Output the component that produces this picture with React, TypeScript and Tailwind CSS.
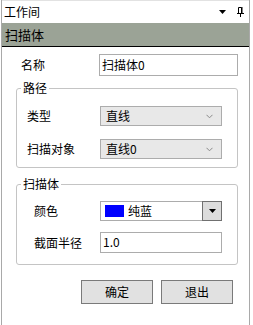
const FONT = { fontFamily: '"Microsoft YaHei", "Noto Sans CJK SC", sans-serif' };

function Chevron() {
  return (
    <svg width="7" height="5" viewBox="0 0 7 5" className="shrink-0">
      <path d="M0.5 0.8 L3.5 3.8 L6.5 0.8" fill="none" stroke="#8a8a8a" strokeWidth="1" />
    </svg>
  );
}

function Select({ value }: { value: string }) {
  return (
    <div className="flex h-[20px] w-[122px] items-center justify-between border border-[#acacac] bg-[#e8e8e8] pl-[5px] pr-[8px] text-[12px] leading-[16px] text-black">
      <span>{value}</span>
      <Chevron />
    </div>
  );
}

function Group({ title, children }: { title: string; children: React.ReactNode }) {
  return (
    <fieldset className="ml-[14px] w-[222px] rounded-[3px] border border-[#c4c4c4] p-0">
      <legend className="ml-[4px] px-[2px] text-[12px] leading-[16px] text-black">{title}</legend>
      {children}
    </fieldset>
  );
}

export default function App() {
  return (
    <div className="h-[325px] w-[253px] bg-white" style={FONT}>
      <div className="ml-[1px] flex h-full w-[249px] flex-col border-x border-[#a9a9a9]">
        {/* header */}
        <div className="flex h-[23px] shrink-0 items-center justify-between border-t border-[#e2e2e2] pl-[2px] pr-[5px]">
          <span className="text-[12px] leading-[16px] text-black">工作间</span>
          <div className="flex items-center gap-[11px]">
            <svg width="7" height="4" viewBox="0 0 7 4">
              <path d="M0 0 H7 L3.5 4 Z" fill="#000" />
            </svg>
            <svg width="7" height="10" viewBox="0 0 7 10">
              <path d="M1.5 0.5 H4.5 V6.5 M1.5 0.5 V6.5" fill="none" stroke="#000" strokeWidth="1" />
              <path d="M4.5 0 H5.5 V6.5 H4.5 Z" fill="#000" />
              <path d="M0 6.5 H7" stroke="#000" strokeWidth="1" />
              <path d="M3.5 6.5 V10" stroke="#000" strokeWidth="1" />
            </svg>
          </div>
        </div>
        <div className="flex h-[24px] shrink-0 items-center border-b border-black bg-[#9ba396] pl-[3px] text-[13px] leading-[16px] text-black">
          扫描体
        </div>

        {/* name */}
        <div className="mt-[7px] flex items-center">
          <span className="ml-[19px] w-[78px] text-[12px] leading-[16px] text-black">名称</span>
          <div className="flex h-[22px] w-[139px] items-center border border-[#acacac] pl-[2px] text-[12px] leading-[16px] text-black">
            扫描体0
          </div>
        </div>

        <div className="mt-[4px]">
          <Group title="路径">
            <div className="flex flex-col gap-[13px] pb-[8px] pl-[10px] pt-[10px]">
              <div className="flex items-center">
                <span className="w-[73px] text-[12px] leading-[16px] text-black">类型</span>
                <Select value="直线" />
              </div>
              <div className="flex items-center">
                <span className="w-[73px] text-[12px] leading-[16px] text-black">扫描对象</span>
                <Select value="直线0" />
              </div>
            </div>
          </Group>
        </div>

        <div className="mt-[8px]">
          <Group title="扫描体">
            <div className="flex flex-col gap-[11px] pb-[11px] pl-[17px] pt-[9px]">
              <div className="flex items-center">
                <span className="w-[66px] text-[12px] leading-[16px] text-black">颜色</span>
                <div className="flex h-[20px] w-[122px] items-center border border-[#acacac] bg-white">
                  <span className="ml-[4px] h-[12px] w-[19px] bg-[#0000ff]" />
                  <span className="ml-[4px] flex-1 text-[12px] leading-[16px] text-black">纯蓝</span>
                  <div className="-my-px -mr-px flex h-[20px] w-[20px] items-center justify-center border border-[#707070] bg-[#dcdcdc]">
                    <svg width="7" height="4" viewBox="0 0 7 4">
                      <path d="M0 0 H7 L3.5 4 Z" fill="#000" />
                    </svg>
                  </div>
                </div>
              </div>
              <div className="flex items-center">
                <span className="w-[66px] text-[12px] leading-[16px] text-black">截面半径</span>
                <div className="h-[21px] w-[122px] border border-[#acacac] pl-[2px] pt-[1px] text-[12px] leading-[16px] text-black">
                  1.0
                </div>
              </div>
            </div>
          </Group>
        </div>

        {/* buttons */}
        <div className="mt-[15px] flex gap-[8px] pl-[79px]">
          <button className="h-[24px] w-[72px] border border-[#7a7a7a] bg-[#e1e1e1] text-[12px] leading-[16px] text-black">
            确定
          </button>
          <button className="h-[24px] w-[72px] border border-[#7a7a7a] bg-[#e1e1e1] text-[12px] leading-[16px] text-black">
            退出
          </button>
        </div>
      </div>
    </div>
  );
}
